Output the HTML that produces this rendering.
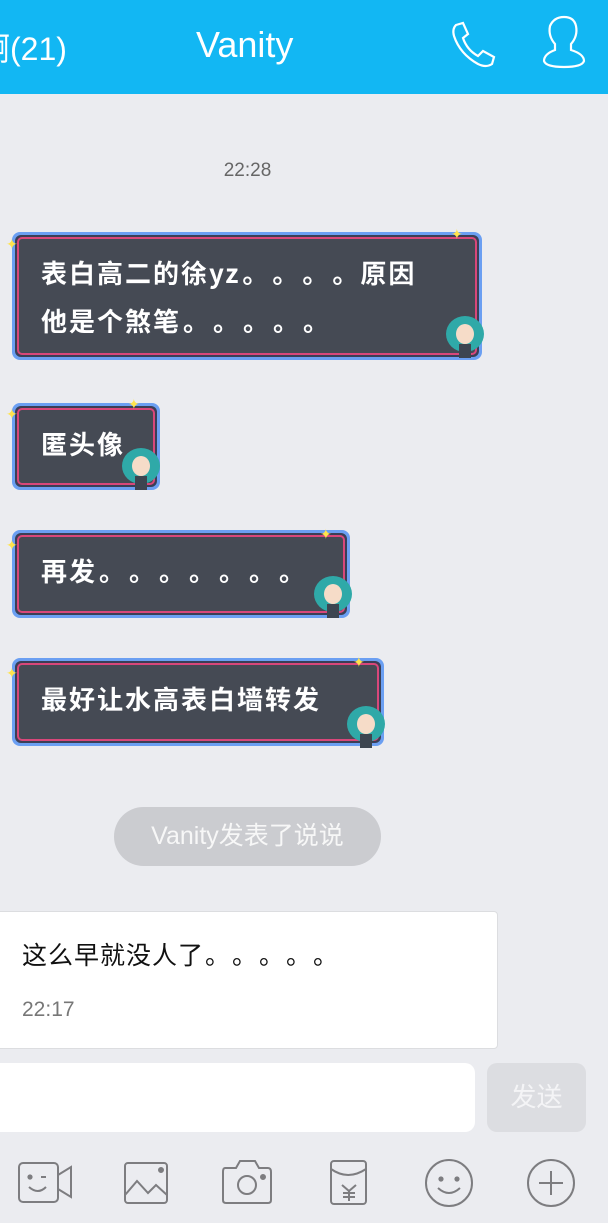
<!DOCTYPE html>
<html><head><meta charset="utf-8"><style>
*{margin:0;padding:0;box-sizing:border-box}
body{width:608px;height:1223px;background:#ebecf0;position:relative;overflow:hidden;font-family:"Liberation Sans","Noto Sans CJK SC",sans-serif}
.hdr{position:absolute;left:0;top:0;width:608px;height:94px;background:#12b7f3;color:#fff;overflow:hidden}
.abs{position:absolute}
.cjk{font-family:"Noto Sans CJK SC","Liberation Sans",sans-serif}
.b{position:absolute;left:12px;border-radius:8px;background:#6b9ff2;padding:3px}
.b .i{width:100%;height:100%;border-radius:6px;background:#3b3f56;padding:2px}
.b .j{width:100%;height:100%;border:2px solid #d9477a;border-radius:5px;background:#454a54;color:#fff;font-family:"Noto Sans CJK SC",sans-serif;font-weight:bold;font-size:26px;line-height:48px;padding:10px 0 0 22px;letter-spacing:2px;white-space:nowrap}
.p{display:inline-block;width:30px;text-align:center;letter-spacing:0}
.mk{position:absolute;width:42px;height:48px}
.star{position:absolute;color:#ffe34d;font-size:14px}
</style></head><body>
<div class="hdr">
<div class="abs" style="left:-22px;top:24px;font-size:32px">啊(21)</div>
<div class="abs" style="left:196px;top:24px;font-size:36px">Vanity</div>
<svg class="abs" style="left:448px;top:20px" width="52" height="50" viewBox="0 0 52 50" fill="none" stroke="#fff" stroke-width="2.2"><path d="M8 5 L15 3 L20 14 L15 18 Q19 30 30 36 L35 31 L46 37 L44 44 Q38 48 30 44 Q12 34 6 16 Q4 9 8 5Z"/></svg>
<svg class="abs" style="left:538px;top:14px" width="52" height="56" viewBox="0 0 52 56" fill="none" stroke="#fff" stroke-width="2.2"><path d="M17 30 Q10 22 12 12 Q16 3 26 3 Q36 3 38 12 Q40 22 33 30 L33 36 Q46 40 46 47 Q44 53 26 53 Q8 53 6 47 Q6 40 17 36 Z"/></svg>
</div>
<div class="abs" style="top:160px;left:0;width:495px;text-align:center;font-size:19px;color:#666">22:28</div>

<div class="b" style="top:232px;width:470px;height:128px"><div class="i"><div class="j">表白高二的徐yz<span class="p">。</span><span class="p">。</span><span class="p">。</span><span class="p">。</span>原因<br>他是个煞笔<span class="p">。</span><span class="p">。</span><span class="p">。</span><span class="p">。</span><span class="p">。</span></div></div></div>
<div class="b" style="top:403px;width:148px;height:87px"><div class="i"><div class="j">匿头像</div></div></div>
<div class="b" style="top:530px;width:338px;height:88px"><div class="i"><div class="j">再发<span class="p">。</span><span class="p">。</span><span class="p">。</span><span class="p">。</span><span class="p">。</span><span class="p">。</span><span class="p">。</span></div></div></div>
<div class="b" style="top:658px;width:372px;height:88px"><div class="i"><div class="j">最好让水高表白墙转发</div></div></div>

<span class="star" style="left:6px;top:236px">✦</span><span class="star" style="left:451px;top:226px">✦</span>
<span class="star" style="left:6px;top:406px">✦</span><span class="star" style="left:128px;top:396px">✦</span>
<span class="star" style="left:6px;top:537px">✦</span><span class="star" style="left:320px;top:526px">✦</span>
<span class="star" style="left:6px;top:665px">✦</span><span class="star" style="left:353px;top:654px">✦</span>

<svg class="mk" style="left:444px;top:314px" viewBox="0 0 42 48"><ellipse cx="21" cy="20" rx="19" ry="18" fill="#2fa9a8"/><ellipse cx="21" cy="20" rx="9" ry="10" fill="#f6dcc8"/><rect x="15" y="30" width="12" height="14" fill="#3d4550"/></svg>
<svg class="mk" style="left:120px;top:446px" viewBox="0 0 42 48"><ellipse cx="21" cy="20" rx="19" ry="18" fill="#2fa9a8"/><ellipse cx="21" cy="20" rx="9" ry="10" fill="#f6dcc8"/><rect x="15" y="30" width="12" height="14" fill="#3d4550"/></svg>
<svg class="mk" style="left:312px;top:574px" viewBox="0 0 42 48"><ellipse cx="21" cy="20" rx="19" ry="18" fill="#2fa9a8"/><ellipse cx="21" cy="20" rx="9" ry="10" fill="#f6dcc8"/><rect x="15" y="30" width="12" height="14" fill="#3d4550"/></svg>
<svg class="mk" style="left:345px;top:704px" viewBox="0 0 42 48"><ellipse cx="21" cy="20" rx="19" ry="18" fill="#2fa9a8"/><ellipse cx="21" cy="20" rx="9" ry="10" fill="#f6dcc8"/><rect x="15" y="30" width="12" height="14" fill="#3d4550"/></svg>

<div class="abs" style="left:114px;top:807px;width:267px;height:59px;border-radius:30px;background:#cbccd0;color:#f7f7f7;font-size:25px;line-height:59px;text-align:center">Vanity发表了说说</div>

<div class="abs" style="left:-4px;top:911px;width:502px;height:138px;background:#fff;border:1px solid #dcdde0;border-radius:4px"></div>
<div class="abs cjk" style="left:22px;top:936px;font-size:25px;color:#111;letter-spacing:1px">这么早就没人了<span class="p" style="width:27px">。</span><span class="p" style="width:27px">。</span><span class="p" style="width:27px">。</span><span class="p" style="width:27px">。</span><span class="p" style="width:27px">。</span></div>
<div class="abs" style="left:22px;top:998px;font-size:21px;color:#777">22:17</div>

<div class="abs" style="left:-10px;top:1063px;width:485px;height:69px;background:#fff;border-radius:10px"></div>
<div class="abs" style="left:487px;top:1063px;width:99px;height:69px;background:#dcdde1;border-radius:10px;color:#f4f4f6;font-size:26px;line-height:69px;text-align:center">发送</div>

<svg class="abs" style="left:0;top:1155px" width="608" height="60" viewBox="0 0 608 60" fill="none" stroke="#7d7d80" stroke-width="2">
<rect x="19" y="8" width="39" height="39" rx="4"/><path d="M58 20 L71 12 L71 42 L58 34"/><circle cx="30" cy="22" r="1.6" fill="#7d7d80"/><path d="M41 22 H46"/><path d="M29 32 Q38 40 46 32"/>
<rect x="125" y="8" width="42" height="40" rx="3"/><path d="M125 40 L137 26 L148 38 L156 30 L167 40"/><circle cx="161" cy="15" r="2" fill="#7d7d80"/>
<path d="M225 13 H236 L240 6 H255 L259 13 H268 Q271 13 271 17 V45 Q271 48 268 48 H226 Q223 48 223 45 V17 Q223 13 225 13Z"/><circle cx="247" cy="30" r="9"/><circle cx="263" cy="22" r="2" fill="#7d7d80"/>
<rect x="331" y="6" width="35" height="43" rx="3"/><path d="M331 14 Q348 26 366 14"/><path d="M342 30 L349 36 L356 30 M349 36 V46 M343 38 H355 M343 42 H355"/>
<circle cx="449" cy="28" r="23"/><circle cx="441" cy="24" r="1.6" fill="#7d7d80"/><circle cx="457" cy="24" r="1.6" fill="#7d7d80"/><path d="M438 33 Q449 43 460 33"/>
<circle cx="551" cy="28" r="23"/><path d="M539 28 H563 M551 16 V40"/>
</svg>
</body></html>
